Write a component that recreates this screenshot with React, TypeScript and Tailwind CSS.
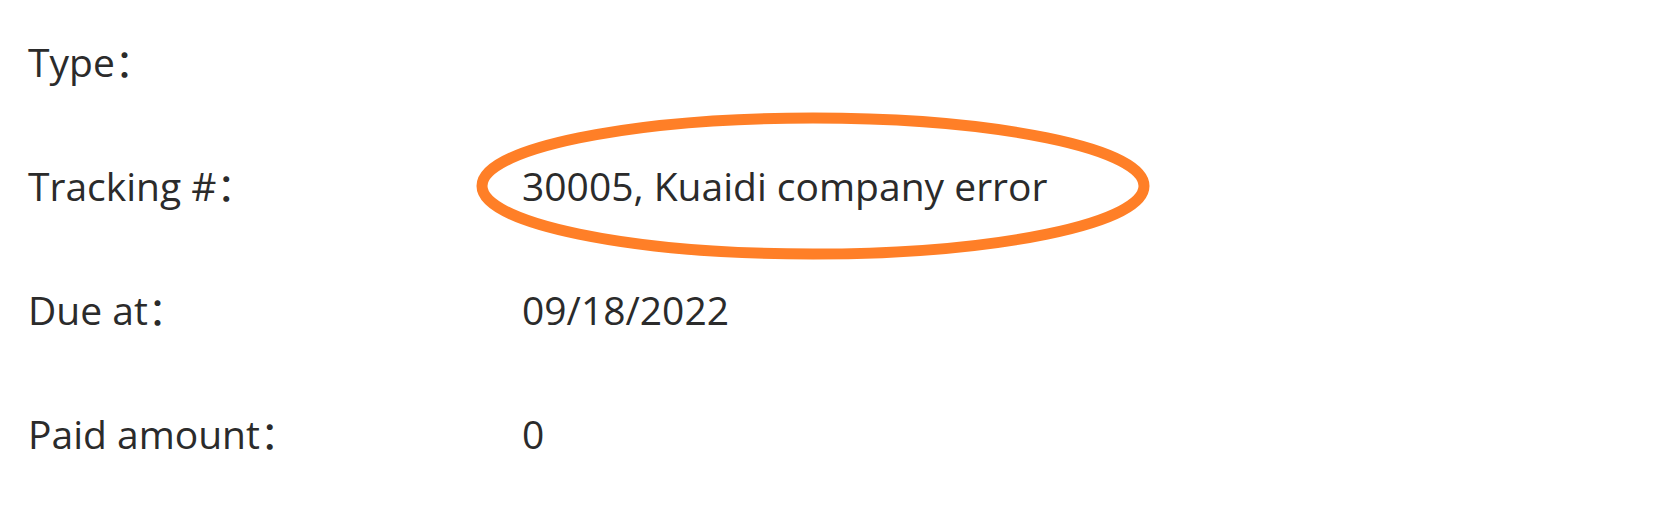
import React from 'react'

const rows = [
  { label: 'Type', value: '' },
  { label: 'Tracking #', value: '30005, Kuaidi company error', circled: true },
  { label: 'Due at', value: '09/18/2022' },
  { label: 'Paid amount', value: '0' },
]

const App = () => {
  return (
    <div
      className="w-[1680px] h-[509px] bg-white text-[#2b2b2b] text-[39px] overflow-hidden"
      style={{ fontFamily: '"Open Sans", "Noto Sans CJK SC", sans-serif' }}
    >
      {rows.map((row) => (
        <div key={row.label} className="flex items-center h-[124px] pl-[28px]">
          <div className="w-[494px] shrink-0">{row.label}：</div>
          <div className="relative">
            {row.value}
            {row.circled && (
              <svg
                className="absolute left-[-46px] top-[-45px] pointer-events-none"
                width="674"
                height="148"
                viewBox="0 0 674 148"
              >
                <ellipse cx="337" cy="74" rx="331" ry="68" fill="none" stroke="#ff7f27" strokeWidth="11" />
              </svg>
            )}
          </div>
        </div>
      ))}
    </div>
  )
}

export default App
